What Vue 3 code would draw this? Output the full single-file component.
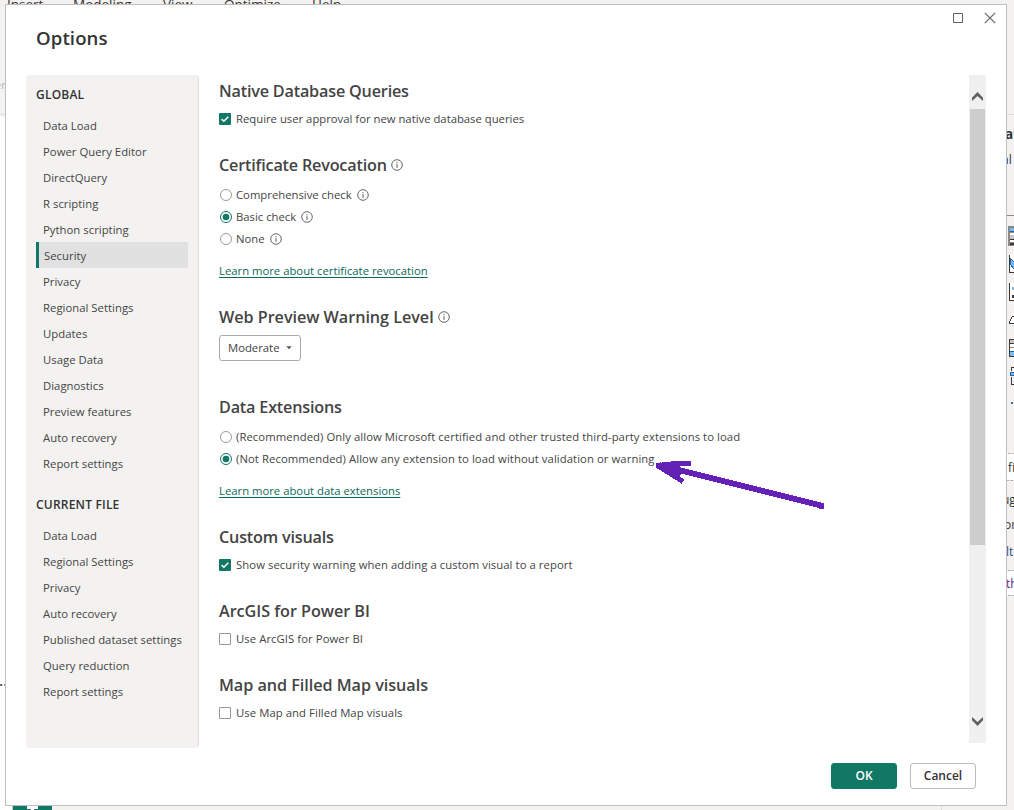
<script setup>
import { ref } from 'vue'

const groups = [
  {
    title: 'GLOBAL',
    items: ['Data Load', 'Power Query Editor', 'DirectQuery', 'R scripting', 'Python scripting', 'Security', 'Privacy', 'Regional Settings', 'Updates', 'Usage Data', 'Diagnostics', 'Preview features', 'Auto recovery', 'Report settings'],
  },
  {
    title: 'CURRENT FILE',
    items: ['Data Load', 'Regional Settings', 'Privacy', 'Auto recovery', 'Published dataset settings', 'Query reduction', 'Report settings'],
  },
]
const active = ref('Security')

const sections = [
  { title: 'Native Database Queries', tight: true, checks: [{ label: 'Require user approval for new native database queries', on: true }] },
  {
    title: 'Certificate Revocation',
    tight: true,
    info: true,
    radios: [
      { label: 'Comprehensive check', info: true },
      { label: 'Basic check', info: true, on: true },
      { label: 'None', info: true },
    ],
    link: 'Learn more about certificate revocation',
  },
  { title: 'Web Preview Warning Level', info: true, select: 'Moderate' },
  {
    title: 'Data Extensions',
    tight: true,
    radios: [
      { label: '(Recommended) Only allow Microsoft certified and other trusted third-party extensions to load', wide: true },
      { label: '(Not Recommended) Allow any extension to load without validation or warning', on: true, wide: true },
    ],
    link: 'Learn more about data extensions',
  },
  { title: 'Custom visuals', tight: true, checks: [{ label: 'Show security warning when adding a custom visual to a report', on: true, wide: true }] },
  { title: 'ArcGIS for Power BI', checks: [{ label: 'Use ArcGIS for Power BI', wide: true }] },
  { title: 'Map and Filled Map visuals', checks: [{ label: 'Use Map and Filled Map visuals', wide: true }] },
]
</script>

<template>
  <div class="screen">
    <!-- Application window behind the dialog -->
    <div class="ribbon">
      <span class="tab t1">Insert</span>
      <span class="tab t2">Modeling</span>
      <span class="tab t3">View</span>
      <span class="tab t4">Optimize</span>
      <span class="tab t5">Help</span>
      <span class="clip-text">er</span>
    </div>
    <span class="dots">...</span>
    <div class="pane">
      <svg width="8" height="810" viewBox="1006 0 8 810" shape-rendering="crispEdges">
        <path d="M1006 114.500h8" stroke="#dcdbda" />
        <path d="M1006 215.500h8" stroke="#8a8886" />
        <path d="M1008 226h6v20h-6z" fill="#8a8886" />
        <path d="M1010 228h4v3h-4z" fill="#78bbf0" />
        <path d="M1010 231h4v1h-4z" fill="#1767b2" />
        <path d="M1010 233h4v2h-4zM1010 240h4v2h-4z" fill="#fff" />
        <path d="M1010 235h4v4h-4z" fill="#c8c6c4" />
        <path d="M1010 239h4v1h-4zM1010 243h4v2h-4z" fill="#3b3a39" />
        <path d="M1010 255h4v17h-4zM1010 283h4v17h-4z" fill="#fff" />
        <path d="M1010 258l4 4v7l-4-5z" fill="#78bbf0" stroke="#1767b2" />
        <path d="M1009.500 255v17.500h4.500M1009.500 283v17.500h4.500" fill="none" stroke="#3b3a39" />
        <path d="M1012 287h2v3h-2z" fill="#78bbf0" />
        <path d="M1012 295h2v3h-2z" fill="#3b3a39" />
        <path d="M1014 316c-3 1-4 4-4.500 7.500h4.500" fill="#fff" stroke="#3b3a39" />
        <path d="M1009 339h5v18h-5z" fill="#fff" />
        <path d="M1010 340h4v3h-4z" fill="#c8c6c4" />
        <path d="M1010 352h4v4h-4z" fill="#78bbf0" />
        <path d="M1014 339.500h-4.500v17h4.500M1010 343.500h4" fill="none" stroke="#3b3a39" />
        <path d="M1010 347.500h4" stroke="#8a8886" />
        <path d="M1010 351.500h4" stroke="#1767b2" />
        <path d="M1014 367.500h-2.500v3M1011.500 377v7.500h2.500" fill="none" stroke="#3b3a39" />
        <path d="M1010.500 372.500h4v3h-4z" fill="#78bbf0" stroke="#1767b2" />
        <path d="M1011 402h1v2h-1z" fill="#8a6a58" />
        <path d="M1012 402h1v2h-1z" fill="#1767b2" />
        <path d="M1006 454h8v26h-8zM1006 571h8v24h-8z" fill="#fff" />
        <path d="M1008 453.500h3M1012 453.500h2M1007 480.500h2M1010 480.500h3M1008 570.500h3M1012 570.500h2M1008 595.500h3M1012 595.500h2" stroke="#b3b0ad" />
      </svg>
      <span class="frag f1">at</span>
      <span class="frag f2">al</span>
      <span class="frag f3">fi</span>
      <span class="frag f4">ug</span>
      <span class="frag f5">or</span>
      <span class="frag f6">lte</span>
      <span class="frag f7">th</span>
    </div>
    <div class="tabstrip"><i class="page"></i><i class="split"></i></div>

    <div class="dialog">
      <header class="head">
        <h1>Options</h1>
        <div class="winbtns">
          <svg width="10" height="10" viewBox="0 0 10 10"><path d="M.5.5h9v9h-9z" fill="none" stroke="#5f5f5f" /></svg>
          <svg width="12" height="12" viewBox="0 0 12 12"><path d="M.8.8l10.400 10.400M11.200.8L.8 11.200" stroke="#666" stroke-width="1.200" /></svg>
        </div>
      </header>

      <div class="body">
        <nav class="side">
          <section v-for="(g, gi) in groups" :key="g.title" class="group">
            <h2>{{ g.title }}</h2>
            <div v-for="it in g.items" :key="it" class="item" :class="{ active: gi === 0 && it === active }">{{ it }}</div>
          </section>
        </nav>

        <main class="content">
          <section v-for="s in sections" :key="s.title" class="sec" :class="{ 'has-select': s.select }">
            <h3>
              <span :class="{ tight: s.tight }">{{ s.title }}</span>
              <svg v-if="s.info" class="info" width="12" height="12" viewBox="0 0 12 12"><circle cx="6" cy="6" r="5.300" fill="none" stroke="#555" stroke-width=".9" /><path d="M6 5.200v3.600M6 3.200v1.100" stroke="#555" /></svg>
            </h3>
            <div v-if="s.checks" class="rows">
              <label v-for="c in s.checks" :key="c.label" class="row">
                <svg v-if="c.on" class="box" width="12" height="12" viewBox="0 0 12 12"><rect width="12" height="12" rx="1" fill="#117865" /><path d="M2.600 6.100l2.300 2.200 4.400-4.600" fill="none" stroke="#fff" stroke-width="1.500" /></svg>
                <svg v-else class="box" width="12" height="12" viewBox="0 0 12 12"><path d="M.5.5h11v11H.5z" fill="#fff" stroke="#999" /></svg>
                <span class="label" :class="{ wide: c.wide }">{{ c.label }}</span>
              </label>
            </div>
            <div v-if="s.radios" class="rows radios">
              <label v-for="r in s.radios" :key="r.label" class="row">
                <svg class="radio" width="12" height="12" viewBox="0 0 12 12"><circle cx="6" cy="6" r="5.500" fill="#fff" :stroke="r.on ? '#117865' : '#999'" /><circle v-if="r.on" cx="6" cy="6" r="3.300" fill="#117865" /></svg>
                <span class="label" :class="{ wide: r.wide }">{{ r.label }}</span>
                <svg v-if="r.info" class="info" width="12" height="12" viewBox="0 0 12 12"><circle cx="6" cy="6" r="5.300" fill="none" stroke="#555" stroke-width=".9" /><path d="M6 5.200v3.600M6 3.200v1.100" stroke="#555" /></svg>
              </label>
            </div>
            <a v-if="s.link" class="link">{{ s.link }}</a>
            <button v-if="s.select" class="select">
              <span class="label">{{ s.select }}</span>
              <svg width="6" height="4" viewBox="0 0 6 4"><path d="M.3.300h5.400L3 3.300z" fill="#555" /></svg>
            </button>
          </section>
        </main>

        <div class="scroll">
          <svg class="up" width="11" height="9" viewBox="0 0 11 9"><path d="M0 9V5.800L5.500 0 11 5.800V9L5.500 3.900z" fill="#606060" /></svg>
          <div class="thumb"></div>
          <svg class="down" width="11" height="9" viewBox="0 0 11 9"><path d="M0 0v3.200L5.500 9 11 3.200V0L5.500 5.100z" fill="#606060" /></svg>
        </div>
      </div>

      <footer class="foot">
        <button class="btn ok">OK</button>
        <button class="btn cancel">Cancel</button>
      </footer>
    </div>

    <!-- Hand-drawn annotation arrow -->
    <svg class="arrow" width="172" height="52" viewBox="0 0 172 52" shape-rendering="crispEdges">
      <path d="M4 5L166 45.500" fill="none" stroke="#6421b5" stroke-width="5.800" />
      <path d="M164 43h5v6h-5zM31 1h5v5h-5z" fill="#6421b5" />
      <path d="M36 3.500H19L3 6.500M4 6.500l24 15" fill="none" stroke="#6421b5" stroke-width="5" />
      <path d="M1 3l22-2 4 12-4 6L1 8z" fill="#6421b5" />
    </svg>
  </div>
</template>

<style>
body { background: #fff; overflow: hidden; }
</style>

<style scoped>
.screen { position: relative; width: 1014px; height: 810px; overflow: hidden; background: #fff; font-family: "Open Sans", "Noto Sans", sans-serif; font-size: 11.3px; color: #444; }
.ribbon { position: absolute; left: 0; top: 0; width: 1014px; height: 114px; background: #f3f2f1; border-bottom: 1px solid #e1dfdd; box-shadow: 0 1px 2px #e8e7e6; }
.tab { position: absolute; top: -5px; font-size: 13.5px; line-height: 18px; color: #333; }
.t1 { left: 7px; }
.t2 { left: 73px; }
.t3 { left: 163px; }
.t4 { left: 224px; }
.t5 { left: 312px; }
.clip-text { position: absolute; left: -5px; top: 77px; width: 12px; line-height: 16px; color: #b5b3b1; }
.dots { position: absolute; left: -5px; top: 670px; font-size: 15px; line-height: 20px; font-weight: 600; color: #444; }
.pane { position: absolute; left: 1006px; top: 0; width: 8px; height: 810px; overflow: hidden; background: #f3f2f1; }
.pane svg { display: block; }
.frag { position: absolute; line-height: 18px; font-size: 12px; color: #333; white-space: nowrap; }
.f1 { left: -1px; top: 125px; font-size: 13.5px; font-weight: 700; }
.f2 { left: -4px; top: 151px; color: #1f2a5c; }
.f3 { left: 2px; top: 459px; }
.f4 { left: -4px; top: 491px; }
.f5 { left: -2px; top: 516px; }
.f6 { left: 0; top: 543px; color: #2b4a80; }
.f7 { left: 0; top: 575px; color: #5a2a80; }
.tabstrip { position: absolute; left: 12px; top: 805px; width: 1002px; height: 5px; background: #f3f2f1; border-left: 1px solid #c8c6c4; }
.page { position: absolute; left: 0; top: 0; width: 39px; height: 5px; background: linear-gradient(#fff, #fff) 14px 0 / 11px 4px no-repeat, linear-gradient(#fff, #fff) 18px 4px / 3px 1px no-repeat, #117865; }
.split { position: absolute; left: 928px; top: 0; width: 1px; height: 5px; background: #dcdbda; }

.dialog { position: absolute; left: 5px; top: 4px; box-sizing: border-box; width: 1002px; height: 802px; border: 1px solid #bfbfbf; background: #fff; display: flex; flex-direction: column; }
.head { display: flex; justify-content: space-between; height: 70px; flex: none; padding: 0 10px 0 30px; }
h1 { margin: 20px 0 0; font-size: 18.6px; line-height: 26px; font-weight: 600; color: #333; letter-spacing: .1px; }
.winbtns { display: flex; gap: 21px; align-items: center; height: 26px; }
.body { display: flex; height: 673px; flex: none; padding: 0 20px; }
.side { box-sizing: border-box; width: 173px; height: 673px; flex: none; padding: 8px 10px 0; background: #f3f2f1; border-right: 1px solid #dedede; border-radius: 4px; }
h2 { margin: 0; font-size: 12px; line-height: 24px; font-weight: 600; color: #333; letter-spacing: .2px; }
.group h2 { margin-bottom: 5px; }
.group + .group { margin-top: 17px; }
.item { height: 26px; line-height: 27px; padding-left: 7px; white-space: nowrap; letter-spacing: .03px; }
.item.active { background: #e1e1e1; border-left: 3px solid #117865; padding-left: 5px; }
.content { flex: 1; padding: 4px 0 0 20px; }
.sec { margin-bottom: 23px; }
.sec.has-select { margin-bottom: 34px; }
h3 { display: flex; align-items: center; gap: 4px; margin: 0 0 5px; height: 24px; font-size: 16.2px; font-weight: 600; white-space: nowrap; letter-spacing: -.04px; }
.tight { letter-spacing: -.19px; }
.row { display: flex; align-items: center; height: 22px; white-space: nowrap; }
.label { padding-bottom: 2px; }
.wide { letter-spacing: .07px; }
.box, .radio { margin-right: 5px; }
.radios { padding: 2px 0 0 1px; }
.radios .radio { margin-right: 4px; }
.row .info { margin-left: 5px; }
.info, .box, .radio { flex: none; }
.link { display: block; width: max-content; height: 22px; margin-top: 10px; line-height: 22px; color: #0c695a; text-decoration: underline; text-underline-offset: 2px; white-space: nowrap; }
.select { display: flex; align-items: center; justify-content: space-between; box-sizing: border-box; width: 82px; height: 26px; margin-top: 6px; padding: 0 8px; border: 1px solid #aaa; border-radius: 3px; background: #fff; font: inherit; color: #444; }
.scroll { display: flex; flex-direction: column; align-items: center; width: 17px; height: 668px; flex: none; background: #f0f0f0; }
.up { margin-top: 17px; flex: none; }
.thumb { width: 15px; height: 436px; margin-top: 8px; background: #cdcdcd; flex: none; }
.down { margin-top: 172px; flex: none; }
.foot { display: flex; justify-content: flex-end; gap: 13px; padding: 15px 30px 0 0; }
.btn { box-sizing: border-box; width: 66px; height: 26px; padding: 0; border: 1px solid #bbb; border-radius: 3px; background: #fff; font: 600 12px/22px "Open Sans", "Noto Sans", sans-serif; color: #333; }
.ok { background: #117865; border-color: #117865; color: #fff; }
.arrow { position: absolute; left: 655px; top: 460px; }
</style>
